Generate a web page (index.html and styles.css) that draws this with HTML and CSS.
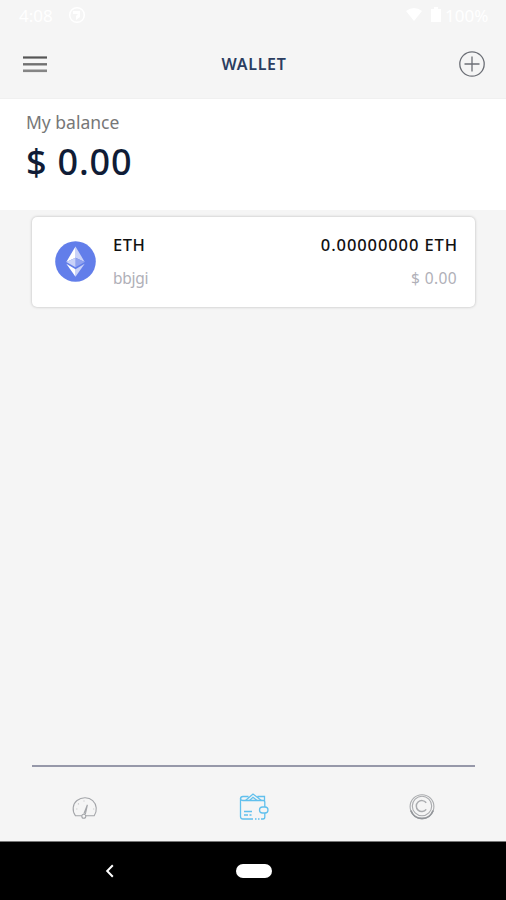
FILE: index.html
```
<!DOCTYPE html>
<html lang="en">

<head>
    <meta charset="UTF-8">
    <meta name="viewport" content="width=device-width, initial-scale=1.0">
    <title>Wallet</title>
    <link rel="stylesheet" href="styles.css">
</head>

<body>
    <div class="status">
        <span class="time">4:08</span>
        <svg class="status-app" width="18" height="18" viewBox="0 0 18 18">
            <circle cx="9" cy="9" r="7.3" fill="none" stroke="#fff" stroke-width="1.5" />
            <path d="M5 5h7v6l-4 3v-4l2-2H5z" fill="#fff" />
        </svg>
        <svg class="wifi" width="18" height="14" viewBox="0 0 18 14">
            <path d="M1 3Q9-3 17 3L9 13z" fill="#fff" />
        </svg>
        <svg class="battery" width="12" height="16" viewBox="0 0 12 16">
            <path d="M1 2h3V0h4v2h3v13H1z" fill="#fff" />
        </svg>
        <span class="percent">100%</span>
    </div>

    <header class="header">
        <svg width="24" height="18" viewBox="0 0 24 18">
            <path d="M0 2.5h24" stroke="#555" stroke-width="2.2" />
            <path d="M0 9.3h24" stroke="#707070" stroke-width="2.4" />
            <path d="M0 15.8h24" stroke="#858585" stroke-width="2.6" />
        </svg>
        <h1>WALLET</h1>
        <svg width="28" height="28" viewBox="0 0 28 28" fill="none" stroke="#6c6f76" stroke-width="1.3">
            <circle cx="14" cy="14" r="12.2" />
            <path d="M14 6.5v15M6.5 14h15" />
        </svg>
    </header>

    <section class="balance">
        <p class="balance-label">My balance</p>
        <p class="balance-value">$ 0.00</p>
    </section>

    <main class="content">
        <div class="card">
            <svg class="coin" width="41" height="41" viewBox="0 0 41 41">
                <circle cx="20.5" cy="20.5" r="20.3" fill="#627eea" />
                <path d="M20.5 5.5v11.2l9.2 4.2z" fill="#c9d2f8" />
                <path d="M20.5 5.5v11.2l-9.2 4.2z" fill="#fff" />
                <path d="M20.5 16.7v9.6l9.2-5.4z" fill="#8fa2f0" />
                <path d="M20.5 16.7v9.6l-9.2-5.4z" fill="#c9d2f8" />
                <path d="M20.5 28.2v7.6l9.2-13z" fill="#c9d2f8" />
                <path d="M20.5 28.2v7.6l-9.2-13z" fill="#fff" />
            </svg>
            <div class="names">
                <p class="coin-name">ETH</p>
                <p class="wallet-name">bbjgi</p>
            </div>
            <div class="amounts">
                <p class="amount">0.00000000 ETH</p>
                <p class="fiat">$ 0.00</p>
            </div>
        </div>
    </main>

    <!-- Tabs -->
    <nav class="tabs">
        <svg width="28" height="30" viewBox="0 0 28 30" fill="none" stroke="#a3a5a9" stroke-width="1.1">
            <path d="M10.8 22.8H4.5C.8 18 1.6 10.8 6 7.5c4.8-3.7 11.7-3.5 15.7.2 4.2 3.8 4.7 10.3 1.5 15.1H14.8" />
            <path d="M12.9 20.8l3.5-9-2 9.2" />
            <path d="M5.3 16h1M7 10.5l.8.8M13 7.5v1M22.2 16h1" opacity=".6" />
            <circle cx="12.8" cy="23.3" r="2" />
        </svg>
        <svg width="30" height="30" viewBox="0 0 30 30" fill="none" stroke="#61c0ed" stroke-width="1.3">
            <path d="M25.8 14V9q0-1.5-1.5-1.5H4Q1.5 7.5 1.5 5.5V23.5q0 2.5 2.5 2.5h10" />
            <path d="M16 26h1.5M19 26h1.5M22 26h2q1.8 0 1.8-2v-4" />
            <path d="M1.5 6Q1.5 3.5 4 3.5h5.5M18.5 3.5h7v4.5M6.5 7.5l7.5-6.5 8.5 6.5M10.5 7.5l3.5-3.2 4 3.2" />
            <path d="M26 14h-2.5a3 3 0 0 0 0 6H26q3 0 3-3t-3-3z" />
            <path d="M5 18.5h8M5 22h4M10.5 22h2" />
        </svg>
        <svg width="28" height="28" viewBox="0 0 28 28" fill="none" stroke="#a9abae" stroke-width="1.1">
            <circle cx="14" cy="13.6" r="11.9" />
            <circle cx="14" cy="13" r="9.7" />
            <path d="M2.8 17.5Q6 25.5 14 25.5t11.2-8" stroke="#929599" stroke-width="1.8" />
            <path d="M18.2 9.8a5.5 5.5 0 1 0 0 6.6" stroke-width="1.5" />
        </svg>
    </nav>

    <footer class="android-nav">
        <svg width="10" height="14" viewBox="0 0 10 14" fill="none" stroke="#fff" stroke-width="2">
            <path d="M7.8 1.2L2.2 7l5.6 5.8" />
        </svg>
        <div class="home"></div>
    </footer>
</body>

</html>
```

FILE: styles.css
```
* {
    box-sizing: border-box;
}

body {
    display: flex;
    flex-direction: column;
    height: 900px;
    margin: 0;
    background-color: #f5f5f5;
    font-family: "Noto Sans", "Open Sans", sans-serif;
    overflow: hidden;
}

p,
h1 {
    margin: 0;
}

svg {
    display: block;
    flex: none;
}

.status {
    display: flex;
    align-items: center;
    height: 30px;
    padding: 0 16px 0 19px;
    color: #fff;
    font-size: 17px;
}

.time {
    width: 36px;
}

.status-app {
    margin-left: 13px;
}

.wifi {
    margin-left: auto;
}

.battery {
    margin: 0 3px 0 7px;
}

.percent {
    width: 45px;
}

.header {
    display: flex;
    align-items: center;
    justify-content: space-between;
    height: 69px;
    padding: 0 20px 0 23px;
    border-bottom: 1px solid #f0f0f0;
}

.header h1 {
    margin-left: 3px;
    color: #2b3d60;
    font-size: 16px;
    font-weight: 600;
    letter-spacing: 0.7px;
    line-height: 20px;
}

.balance {
    height: 111px;
    padding: 11px 26px;
    background-color: #fff;
}

.balance-label {
    color: #777;
    font-size: 17.5px;
    line-height: 24px;
}

.balance-value {
    color: #101c36;
    font-size: 36px;
    font-weight: 500;
    letter-spacing: 0.8px;
    line-height: 56px;
}

.content {
    flex: 1;
    padding: 7px 31px 0 32px;
}

.card {
    display: flex;
    height: 90px;
    padding: 15px 18px 0 23px;
    background-color: #fff;
    border-radius: 5px;
    box-shadow: 0 0 3px rgba(0, 0, 0, 0.25);
}

.coin {
    margin-top: 9px;
}

.names {
    margin-left: 17px;
}

.amounts {
    margin-left: auto;
    text-align: right;
}

.coin-name,
.amount {
    color: #111;
    font-size: 16.5px;
    font-weight: 500;
    line-height: 26px;
}

.coin-name {
    letter-spacing: 0.5px;
}

.amount {
    margin-right: -1px;
    letter-spacing: 0.9px;
}

.wallet-name,
.fiat {
    margin-top: 7px;
    color: #b0b0b8;
    font-size: 15.5px;
    line-height: 26px;
}

.wallet-name {
    letter-spacing: -0.3px;
}

.fiat {
    letter-spacing: 0.4px;
}

.tabs {
    display: flex;
    justify-content: space-between;
    height: 76px;
    margin: 0 31px 0 32px;
    padding: 26px 39px 0 39px;
    border-top: 2px solid #9698a9;
}

.android-nav {
    display: flex;
    align-items: center;
    height: 59px;
    padding-left: 105px;
    background-color: #000;
    border-top: 1px solid #777;
}

.home {
    width: 36px;
    height: 14px;
    margin-left: 121px;
    background-color: #fff;
    border-radius: 7px;
}
```
